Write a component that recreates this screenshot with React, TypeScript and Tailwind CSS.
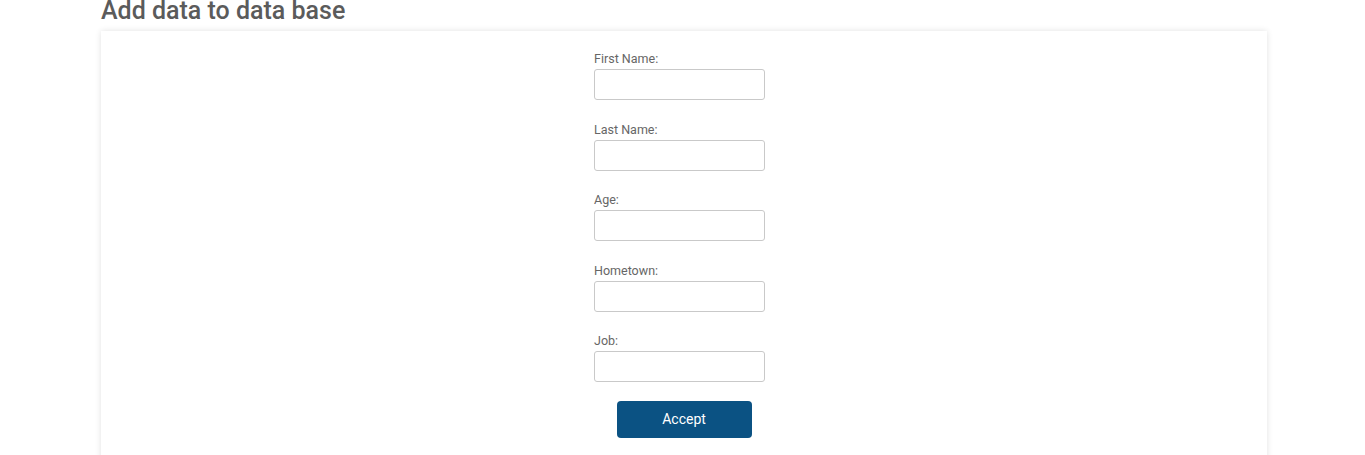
import React, { useState } from 'react';

// Form fields in the order they appear
const FIELDS = [
  { name: 'firstName', label: 'First Name:' },
  { name: 'lastName', label: 'Last Name:' },
  { name: 'age', label: 'Age:' },
  { name: 'hometown', label: 'Hometown:' },
  { name: 'job', label: 'Job:' },
] as const;

export default function App() {
  const [values, setValues] = useState<Record<string, string>>({});

  return (
    <div className="min-h-screen bg-white font-['Roboto',sans-serif] overflow-hidden">
      <div className="ml-[101px] mr-[98px]">
        <h2 className="mt-[-4px] text-[25px] leading-[29px] font-medium text-[#5b5b5b]">
          Add data to data base
        </h2>

        <div className="mt-[6px] bg-white shadow-[0_0_6px_rgba(0,0,0,0.12)] pt-[20px] pb-6">
          <form
            className="w-[180px] mx-auto flex flex-col"
            onSubmit={e => e.preventDefault()}
          >
            <div className="flex flex-col gap-[21.5px]">
              {FIELDS.map(field => (
                <div key={field.name} className="flex flex-col">
                  <label htmlFor={field.name} className="text-[12.5px] leading-[15px] text-[#666] mb-[3px]">
                    {field.label}
                  </label>
                  <input
                    id={field.name}
                    value={values[field.name] ?? ''}
                    onChange={e => setValues(v => ({ ...v, [field.name]: e.target.value }))}
                    className="w-[171px] h-[31px] border border-[#c9c9c9] rounded-[3px] px-2 text-sm outline-none"
                  />
                </div>
              ))}
            </div>
            <button
              type="submit"
              className="mt-[19px] self-center w-[135px] h-[37px] rounded-[4px] bg-[#0b5283] text-white text-[14px]"
            >
              Accept
            </button>
          </form>
        </div>
      </div>
    </div>
  );
}
